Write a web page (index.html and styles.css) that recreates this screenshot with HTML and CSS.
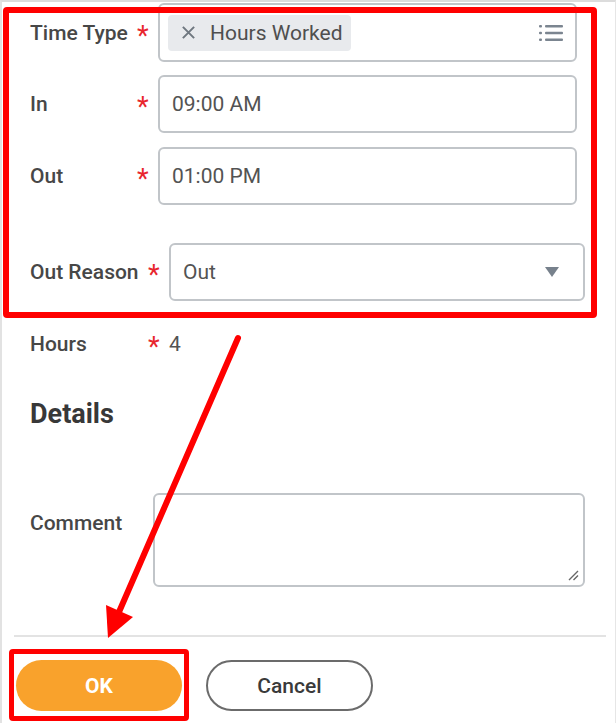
FILE: index.html
```html
<!DOCTYPE html>
<html lang="en">
  <head>
    <title>Enter Time</title>
    <meta charset="utf-8" />
    <link rel="stylesheet" href="styles.css">
  </head>
  <body>
    <div class="sheet">
      <form class="form">
        <div class="row row-first">
          <label class="lbl lbl-short">Time Type</label><span class="req">*</span>
          <div class="field field-short field-tall">
            <span class="chip">
              <svg class="chip-x" viewBox="0 0 12 12"><path d="M1.5 1.5 L10.5 10.5 M10.5 1.5 L1.5 10.5" /></svg>
              Hours Worked
            </span>
            <svg class="list-icon" viewBox="0 0 24 16">
              <rect x="0" y="0" width="3" height="2.4" rx="1" />
              <rect x="6" y="0" width="18" height="2.4" rx="1" />
              <rect x="0" y="6.8" width="3" height="2.4" rx="1" />
              <rect x="6" y="6.8" width="18" height="2.4" rx="1" />
              <rect x="0" y="13.6" width="3" height="2.4" rx="1" />
              <rect x="6" y="13.6" width="18" height="2.4" rx="1" />
            </svg>
          </div>
        </div>
        <div class="row row-in">
          <label class="lbl lbl-short">In</label><span class="req">*</span>
          <div class="field field-short">09:00 AM</div>
        </div>
        <div class="row row-out">
          <label class="lbl lbl-short">Out</label><span class="req">*</span>
          <div class="field field-short">01:00 PM</div>
        </div>
        <div class="row row-reason">
          <label class="lbl lbl-long">Out Reason</label><span class="req">*</span>
          <div class="field field-select">
            Out
            <svg class="caret" viewBox="0 0 14 10"><path d="M0 0 H14 L7 10 Z" /></svg>
          </div>
        </div>
        <div class="row row-hours">
          <label class="lbl lbl-long">Hours</label><span class="req">*</span>
          <span class="value">4</span>
        </div>
        <h2 class="section">Details</h2>
        <div class="row row-comment">
          <label class="lbl lbl-comment">Comment</label>
          <div class="field field-area">
            <svg class="grip" viewBox="0 0 12 12"><path d="M11 2 L2 11 M11 6.5 L6.5 11" /></svg>
          </div>
        </div>
      </form>
      <div class="divider"></div>
      <div class="actions">
        <button class="btn btn-ok" type="button">OK</button>
        <button class="btn btn-cancel" type="button">Cancel</button>
      </div>

      <div class="mark mark-form"></div>
      <div class="mark mark-ok"></div>
      <svg class="arrow" viewBox="0 0 616 723">
        <line x1="238" y1="338" x2="119" y2="612" />
        <polygon points="108,638 106,605 133,617" />
      </svg>
    </div>
  </body>
</html>
```

FILE: styles.css
```css
* {
  box-sizing: border-box;
}
body {
  margin: 0;
  background: #fff;
  font-family: Roboto, "Liberation Sans", sans-serif;
  color: #404040;
}
.sheet {
  position: relative;
  width: 616px;
  height: 723px;
  border-top: 2px solid #dcdcdc;
  border-left: 2px solid #e2e2e2;
  border-right: 1px solid #e6e6e6;
  overflow: hidden;
}
.form {
  padding-left: 28px;
}
.row {
  display: flex;
  align-items: center;
}
.row-first {
  margin-top: 1px;
}
.row-in {
  margin-top: 13px;
}
.row-out {
  margin-top: 14px;
}
.row-reason {
  margin-top: 38px;
}
.row-hours {
  margin-top: 31px;
  height: 24px;
}
.row-comment {
  margin-top: 64px;
  align-items: flex-start;
}
.lbl {
  font-size: 21px;
  font-weight: 500;
  color: #474747;
  line-height: 24px;
}
.lbl-short {
  width: 107px;
}
.lbl-long {
  width: 118px;
}
.lbl-comment {
  width: 123px;
  padding-top: 18px;
}
.req {
  width: 21px;
  color: #e8262d;
  font-size: 27px;
  line-height: 24px;
  height: 24px;
  padding-top: 3px;
}
.field {
  display: flex;
  align-items: center;
  height: 58px;
  border: 2px solid #c1c5c9;
  border-radius: 6px;
  padding: 0 12px;
  font-size: 21px;
  color: #535353;
}
.field-short {
  width: 419px;
}
.field-tall {
  height: 59px;
  padding: 0 12px 0 8px;
  justify-content: space-between;
}
.field-select {
  width: 416px;
  justify-content: space-between;
  padding-right: 24px;
}
.field-area {
  width: 432px;
  height: 94px;
  position: relative;
}
.chip {
  display: flex;
  align-items: center;
  height: 36px;
  padding: 0 8px 0 13px;
  background: #e8eaed;
  border-radius: 4px;
  color: #4f4f4f;
}
.chip-x {
  width: 15px;
  height: 15px;
  margin-right: 14px;
  stroke: #6f7780;
  stroke-width: 1.6;
  fill: none;
}
.list-icon {
  width: 24px;
  height: 16px;
  fill: #7b8590;
}
.caret {
  width: 14px;
  height: 10px;
  fill: #77818c;
}
.grip {
  position: absolute;
  right: 4px;
  bottom: 4px;
  width: 12px;
  height: 12px;
  stroke: #666;
  stroke-width: 1.4;
  fill: none;
}
.value {
  font-size: 21px;
  color: #535353;
  line-height: 24px;
}
.section {
  margin: 43px 0 0;
  font-size: 27px;
  font-weight: 700;
  line-height: 30px;
  color: #383838;
}
.divider {
  margin: 48px 0 0 12px;
  width: 592px;
  height: 2px;
  background: #e3e3e3;
}
.actions {
  display: flex;
  margin-top: 23px;
  padding-left: 14px;
}
.btn {
  height: 51px;
  border-radius: 26px;
  font-family: Roboto, "Liberation Sans", sans-serif;
  font-size: 21px;
  font-weight: 500;
  cursor: pointer;
}
.btn-ok {
  width: 166px;
  border: none;
  background: #f9a22c;
  color: #fff;
  font-weight: 700;
}
.btn-cancel {
  width: 167px;
  margin-left: 24px;
  background: #fff;
  border: 2px solid #6b6b6b;
  color: #3a3a3a;
}
.mark {
  position: absolute;
  border: 6px solid #ff0000;
  border-radius: 4px;
  pointer-events: none;
}
.mark-form {
  left: 1px;
  top: 5px;
  width: 594px;
  height: 311px;
}
.mark-ok {
  left: 7px;
  top: 647px;
  width: 180px;
  height: 72px;
  border-width: 5px;
}
.arrow {
  position: absolute;
  left: -2px;
  top: -2px;
  width: 616px;
  height: 723px;
  pointer-events: none;
}
.arrow line {
  stroke: #ff0000;
  stroke-width: 6;
  stroke-linecap: round;
}
.arrow polygon {
  fill: #ff0000;
}
```
